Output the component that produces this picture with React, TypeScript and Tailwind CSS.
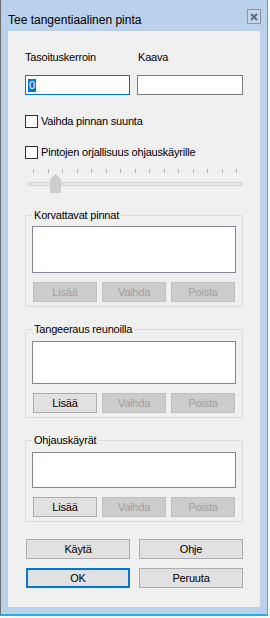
import React from 'react';

const font = { fontFamily: '"Liberation Sans", Arial, sans-serif' };

interface BtnProps {
  label: string;
  disabled?: boolean;
  primary?: boolean;
  className?: string;
}

const Btn: React.FC<BtnProps> = ({ label, disabled, primary, className = '' }) => {
  let look = 'border bg-[#e1e1e1] border-[#adadad] text-black';
  if (disabled) look = 'border bg-[#cccccc] border-[#bfbfbf] text-[#a0a0a0]';
  if (primary) look = 'border-2 bg-[#e1e1e1] border-[#0078d7] text-black';
  return (
    <div className={`h-[20px] flex items-center justify-center text-[11px] leading-[13px] tracking-[-0.2px] ${look} ${className}`}>
      {label}
    </div>
  );
};

interface GroupProps {
  title: string;
  listHeight: string;
  addEnabled?: boolean;
  className?: string;
}

const Group: React.FC<GroupProps> = ({ title, listHeight, addEnabled, className = '' }) => (
  <div className={`relative border border-[#dcdcdc] rounded-[2px] px-[6px] pb-[4px] ${className}`}>
    <span className="absolute left-[6px] top-[-7px] bg-[#f0f0f0] px-[2px] text-[11px] leading-[13px] tracking-[-0.2px] text-black">
      {title}
    </span>
    <div className={`${listHeight} bg-white border border-[#828790]`} />
    <div className="flex justify-between px-[1px] mt-[9px]">
      <Btn label="Lisää" disabled={!addEnabled} className="w-[64px]" />
      <Btn label="Vaihda" disabled className="w-[64px]" />
      <Btn label="Poista" disabled className="w-[64px]" />
    </div>
  </div>
);

const Checkbox: React.FC<{ label: string; className?: string }> = ({ label, className = '' }) => (
  <div className={`flex items-center gap-[3px] h-[13px] ${className}`}>
    <div className="w-[13px] h-[13px] border border-[#333333] bg-white" />
    <span className="text-[11px] leading-[13px] tracking-[-0.2px] text-black">{label}</span>
  </div>
);

export default function App() {
  const ticks = Array.from({ length: 15 });
  return (
    <div style={font} className="w-[270px] h-[618px] bg-white">
      <div className="w-[268px] h-[615px] flex flex-col bg-[#b9d1ea] border-l border-[#6b6b6b] border-r border-b border-r-[#1fb5ec] border-b-[#1fb5ec] shadow-[0_1px_0_#7a8a99]">
        {/* title bar */}
        <div className="h-[31px] flex items-start justify-between pl-[7px] pr-[6px]">
          <span className="text-[12px] leading-[14px] mt-[13px] text-black">Tee tangentiaalinen pinta</span>
          <div className="mt-[9px] w-[14px] h-[15px] border border-[#8a97a6] bg-[#c6d6e8] flex items-center justify-center">
            <svg width="8" height="8" viewBox="0 0 8 8">
              <path d="M1 1 L7 7 M7 1 L1 7" stroke="#5f6d7c" strokeWidth="2" />
            </svg>
          </div>
        </div>

        {/* content */}
        <div className="mx-[7px] h-[576px] bg-[#f0f0f0] px-[17px] flex flex-col">
          <div className="flex mt-[20px] text-[11px] leading-[13px] tracking-[-0.2px] text-black">
            <span className="w-[113px]">Tasoituskerroin</span>
            <span>Kaava</span>
          </div>
          <div className="flex mt-[11px] gap-[7px]">
            <div className="w-[106px] h-[20px] bg-white border border-[#0078d7] flex items-center pl-[2px]">
              <span className="bg-[#0078d7] text-white text-[11px] leading-[13px] px-[1px]">0</span>
            </div>
            <div className="w-[107px] h-[20px] bg-white border border-[#7a7a7a]" />
          </div>

          <Checkbox label="Vaihda pinnan suunta" className="mt-[20px]" />
          <Checkbox label="Pintojen orjallisuus ohjauskäyrille" className="mt-[18px]" />

          {/* slider */}
          <div className="relative mt-[10px] ml-[3px] w-[214px] h-[25px]">
            <div className="flex justify-between px-[5px] h-[4px]">
              {ticks.map((_, i) => (
                <div key={i} className="w-[1px] h-[4px] bg-[#b4b4b4]" />
              ))}
            </div>
            <div className="mt-[9px] h-[4px] bg-[#e7e7e7] border border-[#d6d6d6]" />
            <svg className="absolute left-[22px] top-[5px]" width="11" height="19" viewBox="0 0 11 19">
              <path d="M0 5 L5.5 0 L11 5 L11 19 L0 19 Z" fill="#cdcdcd" />
            </svg>
          </div>

          <Group title="Korvattavat pinnat" listHeight="h-[47px]" className="mt-[21px] pt-[10px]" />
          <Group title="Tangeeraus reunoilla" listHeight="h-[43px]" addEnabled className="mt-[22px] pt-[11px]" />
          <Group title="Ohjauskäyrät" listHeight="h-[36px]" addEnabled className="mt-[22px] pt-[11px]" />

          <div className="flex gap-[9px] pl-[1px] mt-[17px]">
            <Btn label="Käytä" className="w-[104px]" />
            <Btn label="Ohje" className="w-[104px]" />
          </div>
          <div className="flex gap-[9px] pl-[1px] mt-[9px]">
            <Btn label="OK" primary className="w-[104px]" />
            <Btn label="Peruuta" className="w-[104px]" />
          </div>
        </div>
      </div>
    </div>
  );
}
